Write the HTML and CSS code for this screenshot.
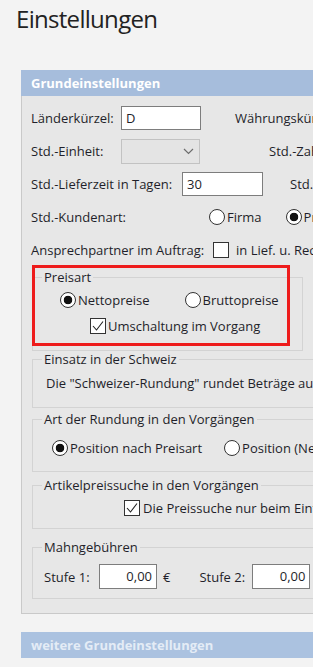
FILE: index.html
```html
<!doctype html>
<html>
    <head>
        <meta http-equiv="Content-Type" content="text/html; charset=utf-8">
        <link rel="stylesheet" href="styles.css">
    </head>
    <body>
        <div class="main">
            <h1 class="title">Einstellungen</h1>

            <div class="panel">
                <div class="panel-head">Grundeinstellungen</div>
                <div class="panel-body">
                    <div class="row">
                        <span class="label w-land">Länderkürzel:</span>
                        <span class="field w-land-in">D</span>
                        <span class="label next-1">Währungskürzel:</span>
                    </div>
                    <div class="row">
                        <span class="label w-land">Std.-Einheit:</span>
                        <span class="field select">
                            <svg width="11" height="7" viewBox="0 0 11 7"><path d="M1 1 L5.5 5.5 L10 1" fill="none" stroke="#6d6d6d" stroke-width="1.2"/></svg>
                        </span>
                        <span class="label next-2">Std.-Zahlungsart:</span>
                    </div>
                    <div class="row">
                        <span class="label w-liefer">Std.-Lieferzeit in Tagen:</span>
                        <span class="field w-liefer-in">30</span>
                        <span class="label next-3">Std.-Lager:</span>
                    </div>
                    <div class="row">
                        <span class="label w-kunde">Std.-Kundenart:</span>
                        <span class="opt"><span class="radio"></span>Firma</span>
                        <span class="opt opt-far"><span class="radio on"></span>Privat</span>
                    </div>
                    <div class="row">
                        <span class="label w-ansp">Ansprechpartner im Auftrag:</span>
                        <span class="opt"><span class="check"></span>in Lief. u. Rechnung</span>
                    </div>

                    <div class="preis-wrap">
                        <fieldset class="group group-preis">
                            <legend>Preisart</legend>
                            <div class="line line-preis">
                                <span class="opt"><span class="radio on"></span>Nettopreise</span>
                                <span class="opt opt-brutto"><span class="radio"></span>Bruttopreise</span>
                            </div>
                            <div class="line line-umsch">
                                <span class="opt"><span class="check">
                                    <svg width="14" height="14" viewBox="0 0 14 14"><path d="M2 7 L5.5 11 L12 2.5" fill="none" stroke="#222" stroke-width="1.1"/></svg>
                                </span>Umschaltung im Vorgang</span>
                            </div>
                        </fieldset>
                        <div class="highlight"></div>
                    </div>

                    <fieldset class="group group-schweiz">
                        <legend>Einsatz in der Schweiz</legend>
                        <div class="line text-line">Die "Schweizer-Rundung" rundet Beträge auf 5 Rappen.</div>
                    </fieldset>

                    <fieldset class="group group-rundung">
                        <legend>Art der Rundung in den Vorgängen</legend>
                        <div class="line line-rundung">
                            <span class="opt"><span class="radio on"></span>Position nach Preisart</span>
                            <span class="opt opt-netto"><span class="radio"></span>Position (Netto)</span>
                        </div>
                    </fieldset>

                    <fieldset class="group group-suche">
                        <legend>Artikelpreissuche in den Vorgängen</legend>
                        <div class="line line-suche">
                            <span class="opt"><span class="check">
                                <svg width="14" height="14" viewBox="0 0 14 14"><path d="M2 7 L5.5 11 L12 2.5" fill="none" stroke="#222" stroke-width="1.1"/></svg>
                            </span>Die Preissuche nur beim Einfügen</span>
                        </div>
                    </fieldset>

                    <fieldset class="group group-mahn">
                        <legend>Mahngebühren</legend>
                        <div class="line line-mahn">
                            <span class="label w-stufe">Stufe 1:</span>
                            <span class="field num">0,00</span>
                            <span class="euro">€</span>
                            <span class="label w-stufe2">Stufe 2:</span>
                            <span class="field num">0,00</span>
                        </div>
                    </fieldset>
                </div>
            </div>

            <div class="panel-head panel-head-off">weitere Grundeinstellungen</div>
        </div>
    </body>
</html>
```

FILE: styles.css
```css
html, body{
    margin: 0;
    padding: 0;
    background: #f3f3f3;
    overflow: hidden;
}
body{
    font-family: "Open Sans", "Noto Sans", sans-serif;
    font-size: 13px;
    color: #1f1f2a;
}
.main{
    width: 440px;
    padding-top: 4px;
}
.title{
    margin: 0 0 0 16px;
    height: 66px;
    font-size: 24px;
    font-weight: normal;
    letter-spacing: -0.7px;
    line-height: 30px;
    color: #222;
}
.panel{
    margin-left: 21px;
}
.panel-head{
    margin-left: 21px;
    height: 26px;
    line-height: 26px;
    padding-left: 10px;
    background: #a6bddc;
    color: #fff;
    font-weight: bold;
    font-size: 13px;
}
.panel .panel-head{
    margin-left: 0;
}
.panel-head-off{
    margin-top: 18px;
    background: #abc2e0;
    color: #e4ecf6;
}
.panel-body{
    background: #e7e7e7;
    border: 1px solid #c9c9c9;
    border-top: none;
    padding: 10px 0 14px 9px;
}
.row{
    display: flex;
    align-items: center;
    height: 24px;
    margin-bottom: 9px;
    white-space: nowrap;
}
.label{
    flex: none;
    white-space: nowrap;
}
.w-land{
    width: 90px;
}
.w-liefer{
    width: 151px;
}
.w-kunde{
    width: 178px;
}
.w-ansp{
    width: 182px;
}
.next-1{
    margin-left: 34px;
}
.next-2{
    margin-left: 69px;
}
.next-3{
    margin-left: 27px;
}
.field{
    flex: none;
    box-sizing: border-box;
    height: 24px;
    line-height: 22px;
    padding: 0 4px;
    background: #fff;
    border: 1px solid #7d7d7d;
}
.w-land-in{
    width: 80px;
}
.w-liefer-in{
    width: 81px;
}
.select{
    width: 79px;
    height: 25px;
    background: #e4e4e4;
    border-color: #c2c2c2;
    display: flex;
    justify-content: flex-end;
    align-items: center;
    padding-right: 5px;
}
.opt{
    display: flex;
    align-items: center;
    white-space: nowrap;
}
.opt-far{
    margin-left: 24px;
}
.radio{
    box-sizing: border-box;
    width: 16px;
    height: 16px;
    margin-right: 2px;
    border: 1px solid #333;
    border-radius: 50%;
    background: #fff;
}
.radio.on{
    background: radial-gradient(circle, #111 0 4px, #fff 4.6px);
}
.check{
    box-sizing: border-box;
    width: 16px;
    height: 16px;
    margin-right: 7px;
    border: 1px solid #333;
    background: #fff;
    display: flex;
    align-items: center;
    justify-content: center;
}
.check svg{
    display: block;
}

/* fieldsets */
.group{
    margin: 0 0 0 1px;
    padding: 0 0 0 0;
    border: 1px solid #d3d3d3;
    min-width: 0;
}
.group legend{
    margin-left: 9px;
    padding: 0 2px;
    line-height: 16px;
}
.line{
    display: flex;
    align-items: center;
    height: 20px;
    white-space: nowrap;
}
.preis-wrap{
    position: relative;
    margin-top: -2px;
    width: 272px;
}
.group-preis{
    padding-bottom: 14px;
}
.line-preis{
    margin-top: 5px;
    padding-left: 27px;
}
.opt-brutto{
    margin-left: 35px;
}
.line-umsch{
    margin-top: 6px;
    padding-left: 57px;
}
.line-umsch .check{
    margin-right: 2px;
}
.highlight{
    position: absolute;
    top: -4px;
    left: 1px;
    width: 258px;
    height: 81px;
    box-sizing: border-box;
    border: 3px solid #ee1c1c;
}
.group-schweiz{
    padding-bottom: 16px;
}
.text-line{
    margin-top: 8px;
    padding-left: 13px;
    height: 16px;
}
.group-rundung{
    margin-top: 3px;
    padding-bottom: 13px;
}
.line-rundung{
    margin-top: 11px;
    padding-left: 19px;
}
.opt-netto{
    margin-left: 22px;
}
.group-suche{
    margin-top: 5px;
    padding-bottom: 10px;
}
.line-suche{
    margin-top: 5px;
    padding-left: 91px;
}
.line-suche .check{
    margin-right: 3px;
}
.group-mahn{
    margin-top: 10px;
    padding-bottom: 9px;
}
.line-mahn{
    margin-top: 9px;
    height: 25px;
    padding-left: 11px;
}
.w-stufe{
    width: 55px;
}
.num{
    width: 58px;
    height: 25px;
    text-align: right;
    padding-right: 4px;
}
.euro{
    margin-left: 6px;
}
.w-stufe2{
    margin-left: 29px;
    width: 53px;
}
```
